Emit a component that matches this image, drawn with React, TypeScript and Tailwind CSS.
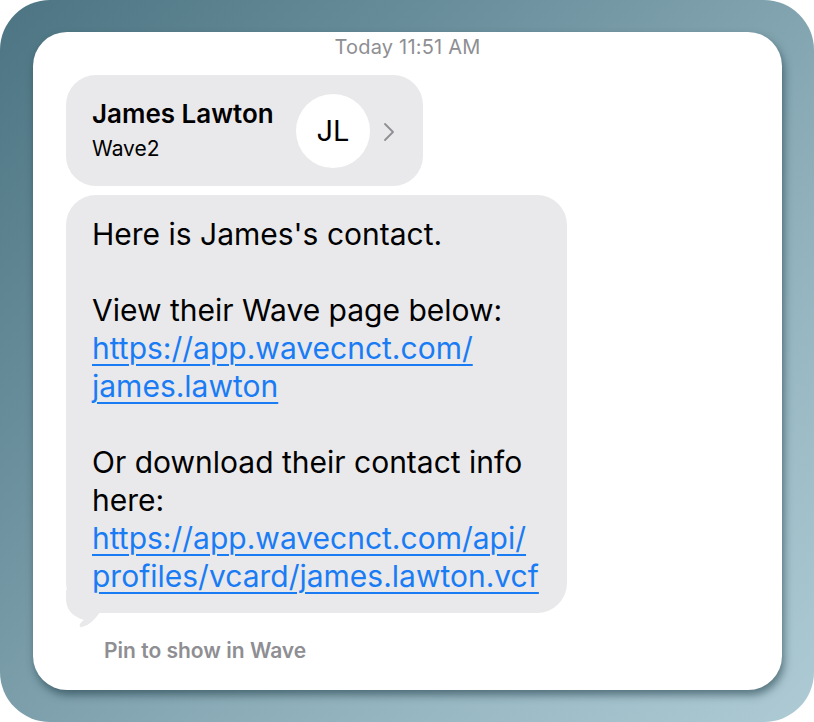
import React from "react";

const font = { fontFamily: "Inter, 'Noto Sans', 'Liberation Sans', sans-serif" };

function Chevron() {
  return (
    <svg width="14" height="22" viewBox="0 0 14 22" fill="none">
      <path d="M3 3 L11 11 L3 19" stroke="#8e8e93" strokeWidth="1.8" strokeLinecap="round" strokeLinejoin="round" />
    </svg>
  );
}

function Tail() {
  return (
    <svg className="absolute left-0 top-[395px]" width="60" height="38" viewBox="0 0 60 38" fill="none">
      <path d="M0 0 L0 8 C0 20 6 26 18 30 C12 34 13 38 16 37 C24 35 30 28 34 22 C40 23 48 23 56 23 L56 0 Z" fill="#e9e9eb" />
    </svg>
  );
}

export default function App() {
  return (
    <div className="w-[814px] h-[722px] bg-white" style={font}>
      <div className="w-[814px] h-[722px] rounded-[50px] bg-[linear-gradient(135deg,#4c7482_0%,#6f93a0_35%,#8fb0bb_65%,#aecbd5_100%)] pl-[33px] pt-[32px]">
        <div className="w-[749px] h-[658px] rounded-[34px] bg-white shadow-[2px_5px_8px_rgba(20,50,60,0.55)] pl-[33px] pt-[4px]">
          <div className="text-center text-[20px] leading-[22px] tracking-[0.2px] text-[#8e8e93] pr-[33px]">Today 11:51 AM</div>

          <div className="mt-[17px] w-[357px] h-[111px] rounded-[30px] bg-[#e9e9eb] flex items-center pl-[26px]">
            <div className="w-[204px] pb-[2px]">
              <div className="text-[26px] leading-[30px] font-semibold text-black">James Lawton</div>
              <div className="mt-[8px] text-[21px] leading-[24px] text-black">Wave2</div>
            </div>
            <div className="w-[74px] h-[74px] rounded-full bg-white flex items-center justify-center text-[29px] text-black">JL</div>
            <div className="ml-[12px] pt-[2px]">
              <Chevron />
            </div>
          </div>

          <div className="relative mt-[9px] w-[501px]">
            <div className="relative z-10 rounded-[30px] bg-[#e9e9eb] pl-[26px] pt-[20px] pb-[18px] text-[30px] leading-[38px] text-black">
              <div>Here is James's contact.</div>
              <div>&nbsp;</div>
              <div>View their Wave page below:</div>
              <div className="text-[#1a7cf5] underline decoration-[1.5px] underline-offset-[5px]">
                https://app.wavecnct.com/
                <br />
                james.lawton
              </div>
              <div>&nbsp;</div>
              <div>Or download their contact info</div>
              <div>here:</div>
              <div className="text-[#1a7cf5] underline decoration-[1.5px] underline-offset-[5px]">
                https://app.wavecnct.com/api/
                <br />
                profiles/vcard/james.lawton.vcf
              </div>
            </div>
            <Tail />
          </div>

          <div className="mt-[26px] pl-[38px] text-[21px] leading-[24px] font-semibold text-[#8e8e93]">Pin to show in Wave</div>
        </div>
      </div>
    </div>
  );
}
